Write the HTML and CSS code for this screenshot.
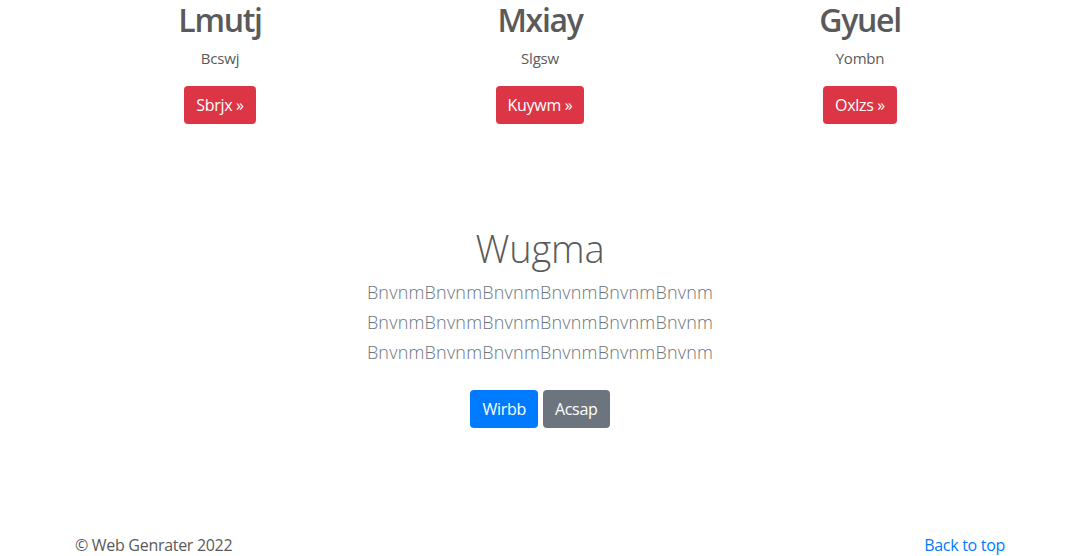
FILE: index.html
```html
<!DOCTYPE html>
<html lang="en">
<head>
<meta charset="utf-8">
<title>Page</title>
<link rel="stylesheet" href="styles.css">
</head>
<body>
<main class="page">
  <div class="container marketing">
    <div class="row">
      <div class="col">
        <h2 class="col-title">Lmutj</h2>
        <p class="col-text">Bcswj</p>
        <p><a class="btn btn-danger" href="#">Sbrjx &raquo;</a></p>
      </div>
      <div class="col">
        <h2 class="col-title">Mxiay</h2>
        <p class="col-text">Slgsw</p>
        <p><a class="btn btn-danger" href="#">Kuywm &raquo;</a></p>
      </div>
      <div class="col">
        <h2 class="col-title">Gyuel</h2>
        <p class="col-text">Yombn</p>
        <p><a class="btn btn-danger" href="#">Oxlzs &raquo;</a></p>
      </div>
    </div>
  </div>

  <section class="hero">
    <h1 class="hero-title">Wugma</h1>
    <p class="lead">BnvnmBnvnmBnvnmBnvnmBnvnmBnvnm<br>BnvnmBnvnmBnvnmBnvnmBnvnmBnvnm<br>BnvnmBnvnmBnvnmBnvnmBnvnmBnvnm</p>
    <p class="hero-actions">
      <a class="btn btn-primary" href="#">Wirbb</a>
      <a class="btn btn-secondary" href="#">Acsap</a>
    </p>
  </section>

  <footer class="container footer">
    <p class="copy">&copy; Web Genrater 2022</p>
    <a class="top-link" href="#">Back to top</a>
  </footer>
</main>
</body>
</html>
```

FILE: styles.css
```css
* { box-sizing: border-box; }
html, body { margin: 0; padding: 0; }
body {
  font-family: "Open Sans", "Noto Sans", "Liberation Sans", sans-serif;
  font-size: 16px;
  line-height: 1.5;
  color: #5a5a5a;
  background: #fff;
}
.page { padding-top: 1px; }
.container {
  width: 960px;
  margin: 0 auto;
  padding: 0 15px;
}
.row {
  display: flex;
  margin: 0 -15px;
}
.col {
  flex: 1 1 0;
  padding: 0 15px;
  text-align: center;
}
.col-title {
  margin: 0 0 8px;
  font-size: 32px;
  line-height: 1.2;
  font-weight: 600;
  letter-spacing: -1.3px;
}
.col-text {
  margin: 0 0 16px;
  font-size: 15px;
  letter-spacing: -0.2px;
}
.col p { margin-top: 0; }
.btn {
  display: inline-block;
  padding: 6px 12px;
  font-size: 16px;
  line-height: 26px;
  border-radius: 4px;
  color: #fff;
  text-decoration: none;
  letter-spacing: -0.3px;
}
.btn-danger { background: #dc3545; }
.btn-primary { background: #007bff; }
.btn-secondary { background: #6c757d; }

.hero {
  text-align: center;
  padding-top: 86px;
}
.hero-title {
  margin: 0 0 6px;
  font-size: 38px;
  line-height: 1.2;
  font-weight: 300;
  letter-spacing: -0.2px;
}
.lead {
  margin: 0 0 23px;
  font-size: 18px;
  line-height: 30px;
  font-weight: 300;
  color: #6c757d;
  letter-spacing: 0.2px;
}
.hero-actions {
  margin: 0;
  display: flex;
  justify-content: center;
  gap: 5px;
}
.footer {
  display: flex;
  justify-content: space-between;
  align-items: baseline;
  margin-top: 105px;
}
.copy {
  margin: 0;
  font-size: 16px;
  letter-spacing: -0.3px;
}
.top-link {
  color: #007bff;
  text-decoration: none;
  font-size: 16px;
  letter-spacing: -0.3px;
}
```
